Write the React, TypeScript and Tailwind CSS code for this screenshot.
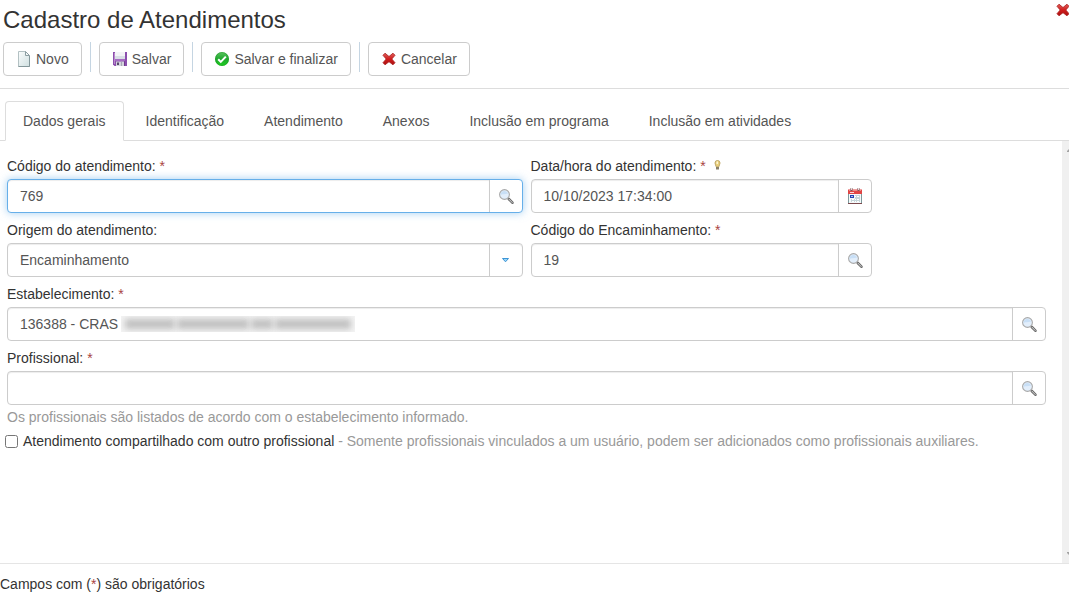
import React, { useState } from 'react';

const TABS = [
  'Dados gerais',
  'Identificação',
  'Atendimento',
  'Anexos',
  'Inclusão em programa',
  'Inclusão em atividades'
];

const ORIGINS = ['Encaminhamento'];

// widths of the masked words after the establishment code
const MASKED_WORDS = [50, 72, 22, 76];

function PageIcon() {
  return (
    <svg width="16" height="16" viewBox="0 0 16 16" aria-hidden="true">
      <defs>
        <linearGradient id="page" x1="0" y1="0" x2="1" y2="1">
          <stop offset="0" stopColor="#fbfdfd" />
          <stop offset="1" stopColor="#cfdfe0" />
        </linearGradient>
      </defs>
      <path d="M2.5.5h7l4 4v11h-11z" fill="url(#page)" stroke="#b3c1c3" />
      <path d="M9.5.5v4h4z" fill="#f4f8f8" stroke="#8c9ea2" strokeLinejoin="round" />
      <path d="M2.5 15.5h11V5" fill="none" stroke="#84979a" />
    </svg>
  );
}

function SaveIcon() {
  return (
    <svg width="16" height="16" viewBox="0 0 16 16" aria-hidden="true">
      <path d="M1 1h14v14H2.500L1 13.500z" fill="#8c4fae" />
      <path d="M2 2h1v11H2z" fill="#b98bcb" />
      <path d="M3 1h10v7H3z" fill="#f3f4f7" />
      <path d="M3 5h10v3H3z" fill="#d9dfe6" />
      <path d="M3 8h10v2H3z" fill="#a56cc2" />
      <path d="M4 10.500h8V15H4z" fill="#d3d5dc" />
      <path d="M5 11.500h2V14H5z" fill="#574a6b" />
      <path d="M9 11h1v4H9z" fill="#a6a8b4" />
      <path d="M12 10.500h1V15h-1z" fill="#6f3b8b" />
    </svg>
  );
}

function CheckIcon() {
  return (
    <svg width="16" height="16" viewBox="0 0 16 16" aria-hidden="true">
      <defs>
        <linearGradient id="ok" x1="0" y1="0" x2="0" y2="1">
          <stop offset="0" stopColor="#5cc460" />
          <stop offset=".5" stopColor="#1fa82e" />
          <stop offset="1" stopColor="#1fd01f" />
        </linearGradient>
      </defs>
      <circle cx="8" cy="8" r="7" fill="url(#ok)" />
      <circle cx="8" cy="8" r="6.500" fill="none" stroke="#168c24" strokeOpacity=".4" />
      <path d="M4.200 8.200l2.600 2.700 5-5.300" fill="none" stroke="#fff" strokeWidth="2" />
    </svg>
  );
}

function CrossIcon() {
  return (
    <svg width="16" height="16" viewBox="0 0 16 16" aria-hidden="true">
      <defs>
        <linearGradient id="cross" x1="0" y1="0" x2="0" y2="1">
          <stop offset="0" stopColor="#e0605c" />
          <stop offset=".5" stopColor="#d01d1d" />
          <stop offset="1" stopColor="#ab1010" />
        </linearGradient>
      </defs>
      <path
        d="M4 2.200L8 5.500l4-3.300L14 4.300 10.800 8l3.200 3.700-2 2.100L8 10.700l-4 3.100-2-2.100L5.200 8 2 4.300z"
        fill="url(#cross)"
        stroke="#a81818"
        strokeWidth=".8"
        strokeLinejoin="round"
      />
    </svg>
  );
}

function SearchIcon() {
  return (
    <svg width="16" height="16" viewBox="0 0 16 16" aria-hidden="true">
      <path d="M10.800 11l3.600 3.700" stroke="#6a6a6a" strokeWidth="2.600" strokeLinecap="round" />
      <path d="M11 11.200l3.200 3.300" stroke="#d2d2d2" strokeWidth="1" strokeLinecap="round" />
      <circle cx="6.500" cy="6.500" r="4.900" fill="#e2eefb" stroke="#a9a9a9" strokeWidth="1.100" />
      <path d="M2.700 7.200c1.500-1.500 4-.5 7.400-1.600a3.800 3.800 0 0 0-7.400 1.600z" fill="#c8dff6" />
    </svg>
  );
}

function CalendarIcon() {
  return (
    <svg width="16" height="16" viewBox="0 0 16 16" aria-hidden="true">
      <path d="M1 2h14v14H1z" fill="#7b4a4e" />
      <path d="M1 6h14v9H1z" fill="#7e9a9c" />
      <path d="M2 6h12v9H2z" fill="#f5f9fa" />
      <path d="M1 1.500h14V6H1z" fill="#e04545" />
      <path d="M2 2h12v1H2z" fill="#f08a86" />
      <path d="M3 4h4v1H3z" fill="#fbd8d6" />
      <path d="M4.500 0v3M11.500 0v3" stroke="#7d5558" strokeWidth="2" />
      <path d="M4.500 0v2M11.500 0v2" stroke="#e6dede" strokeWidth="1" />
      <path d="M8 7h5v7H4v-3h4z" fill="#c6d7db" />
      <path d="M8 8h1v1H8zM10 8h2v1h-2zM5 11h2v1H5zM8 11h1v1H8zM10 11h2v1h-2zM5 13h2v1H5zM8 13h1v1H8zM10 13h2v1h-2z" fill="#fff" />
      <path d="M3 7h4v3H3z" fill="#2443b0" />
      <path d="M4 8h2v1H4z" fill="#a9bcf0" />
    </svg>
  );
}

function ArrowIcon() {
  return (
    <svg width="16" height="16" viewBox="0 0 16 16" aria-hidden="true">
      <path d="M4.500 6.500h6L7.500 9.800z" fill="#9ad6f7" stroke="#3d95d6" strokeLinejoin="round" />
    </svg>
  );
}

function HintIcon() {
  return (
    <svg width="7" height="12" viewBox="0 0 7 12" aria-hidden="true">
      <path d="M3.500.5A2.500 2.500 0 0 1 6 3c0 1.500-1 2.200-1.200 3.800H2.200C2 5.200 1 4.500 1 3A2.500 2.500 0 0 1 3.500.5z" fill="#ead07c" stroke="#bfa765" />
      <path d="M2.500 1.500H4v2.500H2.500z" fill="#fff6cf" />
      <path d="M2 7h3v2.500H2z" fill="#8a8068" />
    </svg>
  );
}

function Required() {
  return <span className="text-[#a94442]">*</span>;
}

interface FieldProps {
  id: string;
  label: string;
  value: string;
  action?: string;
  icon: React.ReactNode;
  className: string;
  options?: string[];
  required?: boolean;
  focused?: boolean;
  hint?: boolean;
  masked?: boolean;
}

function Field({ id, label, value, action, icon, className, options, required, focused, hint, masked }: FieldProps) {
  const [text, setText] = useState(value);

  return (
    <div className={className}>
      <div className="flex h-5 items-center gap-2">
        <label htmlFor={id}>
          {label} {required && <Required />}
        </label>
        {hint && <HintIcon />}
      </div>
      <div
        className={
          'relative mt-[3px] flex h-[34px] rounded border bg-white ' +
          (focused ? 'border-[#66afe9] shadow-[0_0_8px_rgba(102,175,233,0.6)]' : 'border-[#ccc]')
        }
      >
        {options ? (
          <>
            <select
              id={id}
              value={text}
              onChange={(e) => setText(e.target.value)}
              className="w-full appearance-none rounded bg-transparent px-3 text-[#555] shadow-[inset_0_1px_1px_rgba(0,0,0,0.075)] outline-none"
            >
              {options.map((option) => (
                <option key={option}>{option}</option>
              ))}
            </select>
            <span className="pointer-events-none absolute inset-y-0 right-0 flex w-[33px] items-center justify-center border-l border-[#ccc]">
              {icon}
            </span>
          </>
        ) : (
          <>
            <input
              id={id}
              type="text"
              value={text}
              onChange={(e) => setText(e.target.value)}
              className="min-w-0 flex-1 rounded-l bg-transparent px-3 text-[#555] shadow-[inset_0_1px_1px_rgba(0,0,0,0.075)] outline-none"
            />
            <button type="button" aria-label={action} className="flex w-[33px] items-center justify-center border-l border-[#ccc]">
              {icon}
            </button>
          </>
        )}
        {masked && (
          <div className="pointer-events-none absolute top-2 left-[113px] flex h-4 items-center gap-[2px] overflow-hidden bg-[#f4f4f4] px-1">
            {MASKED_WORDS.map((w) => (
              <span key={w} className="h-[10px] bg-[#c0c0c0] blur-[3px]" style={{ width: w }} />
            ))}
          </div>
        )}
      </div>
    </div>
  );
}

function ToolbarButton({ icon, children }: { icon: React.ReactNode; children: React.ReactNode }) {
  return (
    <button type="button" className="flex h-[34px] items-center gap-1 rounded border border-[#ccc] bg-white px-3 text-[#555]">
      {icon}
      {children}
    </button>
  );
}

function Divider() {
  return <span className="h-[30px] w-px bg-[#c5d5e2]" />;
}

export default function App() {
  const [activeTab, setActiveTab] = useState(TABS[0]);
  const [shared, setShared] = useState(false);

  return (
    <div className="flex min-h-screen flex-col overflow-x-hidden bg-white font-['Liberation_Sans',Arial,sans-serif] text-[14px] leading-5 text-[#333]">
      <header className="border-b border-[#ddd] pb-3 pl-[3px]">
        <div className="flex items-start justify-between">
          <h1 className="pt-1 text-[24px] leading-8">Cadastro de Atendimentos</h1>
          <button type="button" aria-label="Fechar" className="-mr-[2px] pt-[2px]">
            <CrossIcon />
          </button>
        </div>
        <div className="mt-[6px] flex gap-2">
          <ToolbarButton icon={<PageIcon />}>Novo</ToolbarButton>
          <Divider />
          <ToolbarButton icon={<SaveIcon />}>Salvar</ToolbarButton>
          <Divider />
          <ToolbarButton icon={<CheckIcon />}>Salvar e finalizar</ToolbarButton>
          <Divider />
          <ToolbarButton icon={<CrossIcon />}>Cancelar</ToolbarButton>
        </div>
      </header>

      <div role="tablist" className="mt-3 flex gap-1 border-b border-[#ddd] pl-[5px]">
        {TABS.map((tab) => (
          <button
            key={tab}
            type="button"
            role="tab"
            aria-selected={tab === activeTab}
            onClick={() => setActiveTab(tab)}
            className={
              'relative -mb-px h-10 rounded-t border px-[17px] text-[#555] ' +
              (tab === activeTab ? 'border-[#ddd] border-b-white bg-white' : 'border-transparent')
            }
          >
            {tab}
          </button>
        ))}
      </div>

      <div className="flex flex-1">
        <main className="flex-1 pt-[15px] pr-4 pl-[7px]">
          <div className="grid grid-cols-12 gap-x-2 gap-y-[7px]">
            <Field id="codigo" label="Código do atendimento:" value="769" action="Pesquisar atendimento" icon={<SearchIcon />} className="col-span-6" required focused />
            <Field id="data" label="Data/hora do atendimento:" value="10/10/2023 17:34:00" action="Abrir calendário" icon={<CalendarIcon />} className="col-span-4" required hint />
            <Field id="origem" label="Origem do atendimento:" value="Encaminhamento" options={ORIGINS} icon={<ArrowIcon />} className="col-span-6" />
            <Field id="encaminhamento" label="Código do Encaminhamento:" value="19" action="Pesquisar encaminhamento" icon={<SearchIcon />} className="col-span-4" required />
            <Field id="estabelecimento" label="Estabelecimento:" value="136388 - CRAS" action="Pesquisar estabelecimento" icon={<SearchIcon />} className="col-span-12" required masked />
            <Field id="profissional" label="Profissional:" value="" action="Pesquisar profissional" icon={<SearchIcon />} className="col-span-12" required />
          </div>
          <p className="mt-[2px] text-[#999]">Os profissionais são listados de acordo com o estabelecimento informado.</p>
          <div className="mt-1 -ml-[2px] flex items-center gap-[5px]">
            <input
              id="compartilhado"
              type="checkbox"
              checked={shared}
              onChange={(e) => setShared(e.target.checked)}
              className="size-[13px]"
            />
            <label htmlFor="compartilhado">
              Atendimento compartilhado com outro profissional
              <span className="text-[#999]"> - Somente profissionais vinculados a um usuário, podem ser adicionados como profissionais auxiliares.</span>
            </label>
          </div>
        </main>
        {/* scroll track */}
        <div className="flex w-[7px] flex-col items-end justify-between overflow-hidden bg-[#f0f0f0] py-2">
          <svg width="2" height="3" viewBox="0 0 2 3" aria-hidden="true">
            <path d="M2 0v3H0V2z" fill="#a3a3a3" />
          </svg>
          <svg width="2" height="3" viewBox="0 0 2 3" aria-hidden="true">
            <path d="M0 0h2v3L0 1z" fill="#a3a3a3" />
          </svg>
        </div>
      </div>

      <footer className="border-t border-[#e5e5e5] pt-[10px] pb-1">
        Campos com (<Required />) são obrigatórios
      </footer>
    </div>
  );
}
